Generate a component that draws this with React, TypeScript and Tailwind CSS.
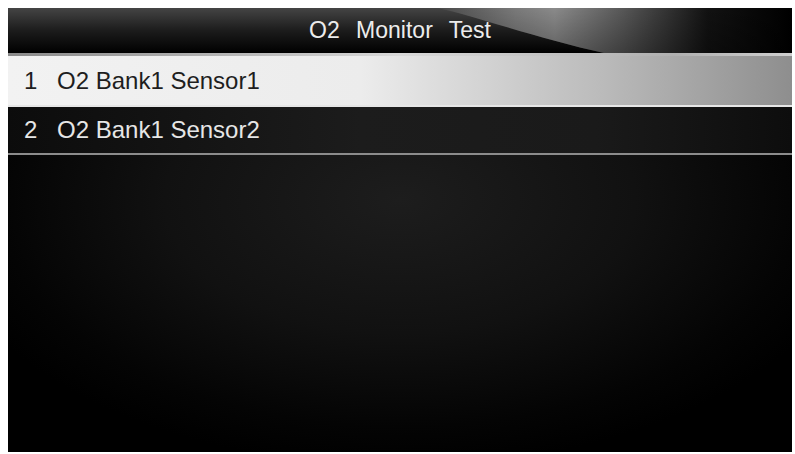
import React from "react";

export default function App() {
  return (
    <div className="w-[795px] h-[454px] bg-white pt-[8px] pl-[8px] overflow-hidden" style={{ fontFamily: '"Liberation Sans", Arial, sans-serif' }}>
      <div className="w-[784px] h-[444px] flex flex-col bg-black overflow-hidden">
        {/* Header */}
        <div className="relative h-[45px] bg-[linear-gradient(to_bottom,#444_0%,#1c1c1c_50%,#000_100%)] flex items-center justify-center">
          <svg className="absolute inset-0" width="784" height="45" viewBox="0 0 784 45" preserveAspectRatio="none">
            <defs>
              <linearGradient id="hg" x1="430" y1="0" x2="784" y2="0" gradientUnits="userSpaceOnUse">
                <stop offset="0" stopColor="#4a4a4a" />
                <stop offset="0.22" stopColor="#7a7a7a" />
                <stop offset="0.33" stopColor="#8a8a8a" />
                <stop offset="0.52" stopColor="#585858" />
                <stop offset="0.76" stopColor="#121212" />
                <stop offset="1" stopColor="#000" />
              </linearGradient>
              <linearGradient id="hv" x1="0" y1="0" x2="0" y2="45" gradientUnits="userSpaceOnUse">
                <stop offset="0" stopColor="#000" stopOpacity="0" />
                <stop offset="1" stopColor="#000" stopOpacity="0.3" />
              </linearGradient>
            </defs>
            <path d="M430 0 C 466 8 536 32 596 45 L 784 45 L 784 0 Z" fill="url(#hg)" />
            <path d="M430 0 C 466 8 536 32 596 45 L 784 45 L 784 0 Z" fill="url(#hv)" />
          </svg>
          <span className="relative z-10 text-[23px] text-[#ececec] [word-spacing:10px] leading-none">O2 Monitor Test</span>
        </div>
        {/* separator */}
        <div className="h-[3px] bg-[linear-gradient(to_right,#8a8a8a_0%,#d8d8d8_50%,#b0b0b0_85%,#d0d0d0_100%)]" />
        {/* Row 1 */}
        <div className="h-[49px] flex items-center bg-[linear-gradient(to_right,#f2f2f2_0%,#ececec_45%,#bcbcbc_75%,#8e8e8e_100%)] text-[#1e1e1e] text-[24px] leading-none">
          <span className="ml-[16px] w-[33px]">1</span>
          <span>O2 Bank1 Sensor1</span>
        </div>
        <div className="h-[2px] bg-[#e6e6e6]" />
        {/* Row 2 */}
        <div className="h-[46px] flex items-center bg-[linear-gradient(to_right,#0c0c0c_0%,#1c1c1c_45%,#1a1a1a_75%,#0d0d0d_100%)] text-[#e6e6e6] text-[24px] leading-none">
          <span className="ml-[16px] w-[33px]">2</span>
          <span>O2 Bank1 Sensor2</span>
        </div>
        <div className="h-[2px] bg-[#8c8c8c]" />
        {/* Body */}
        <div className="flex-1 bg-[radial-gradient(ellipse_60%_90%_at_50%_15%,#1d1d1d_0%,#111_50%,#040404_85%,#000_100%)]" />
      </div>
    </div>
  );
}
